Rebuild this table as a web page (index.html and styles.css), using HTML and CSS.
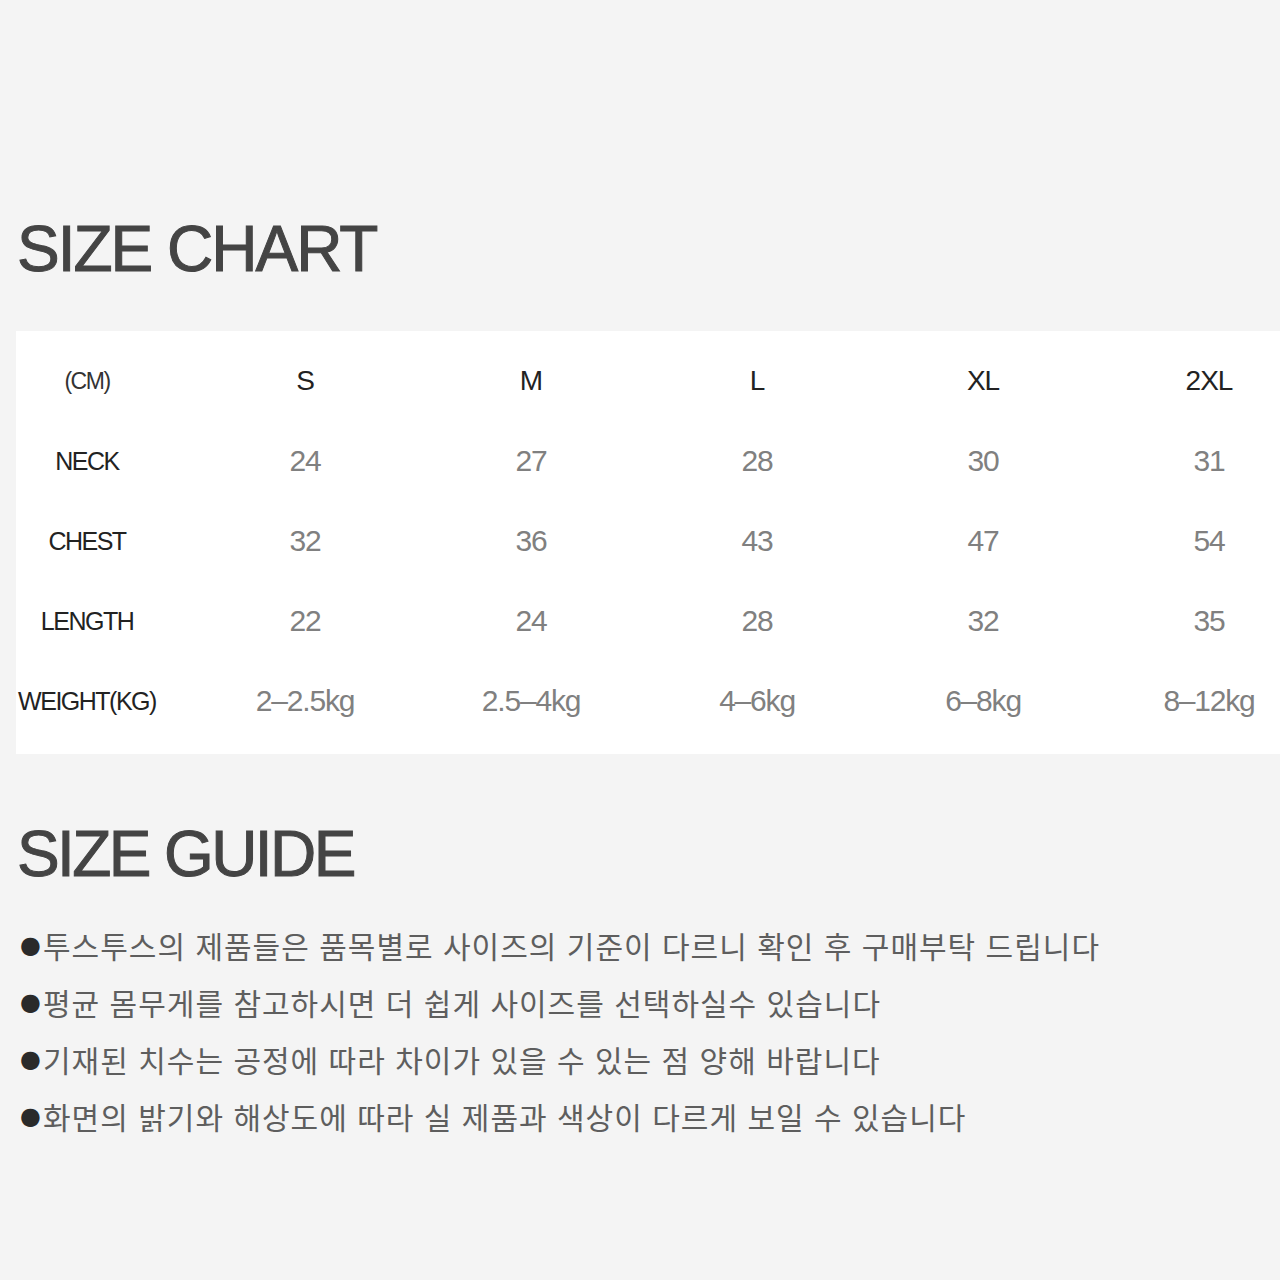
FILE: index.html
```html
<!DOCTYPE html>
<html lang="ko">
<head>
<meta charset="utf-8">
<title>Size Chart</title>
<link rel="stylesheet" href="styles.css">
</head>
<body>
<main class="page">
  <h1 class="heading heading-chart">SIZE CHART</h1>
  <section class="chart">
    <div class="grid">
      <div class="cell label unit">(CM)</div>
      <div class="cell size">S</div>
      <div class="cell size">M</div>
      <div class="cell size">L</div>
      <div class="cell size">XL</div>
      <div class="cell size">2XL</div>

      <div class="cell label">NECK</div>
      <div class="cell val">24</div>
      <div class="cell val">27</div>
      <div class="cell val">28</div>
      <div class="cell val">30</div>
      <div class="cell val">31</div>

      <div class="cell label">CHEST</div>
      <div class="cell val">32</div>
      <div class="cell val">36</div>
      <div class="cell val">43</div>
      <div class="cell val">47</div>
      <div class="cell val">54</div>

      <div class="cell label">LENGTH</div>
      <div class="cell val">22</div>
      <div class="cell val">24</div>
      <div class="cell val">28</div>
      <div class="cell val">32</div>
      <div class="cell val">35</div>

      <div class="cell label">WEIGHT(KG)</div>
      <div class="cell val">2–2.5kg</div>
      <div class="cell val">2.5–4kg</div>
      <div class="cell val">4–6kg</div>
      <div class="cell val">6–8kg</div>
      <div class="cell val">8–12kg</div>
    </div>
  </section>

  <h2 class="heading heading-guide">SIZE GUIDE</h2>
  <ul class="guide">
    <li><span class="dot">●</span>투스투스의 제품들은 품목별로 사이즈의 기준이 다르니 확인 후 구매부탁 드립니다</li>
    <li><span class="dot">●</span>평균 몸무게를 참고하시면 더 쉽게 사이즈를 선택하실수 있습니다</li>
    <li><span class="dot">●</span>기재된 치수는 공정에 따라 차이가 있을 수 있는 점 양해 바랍니다</li>
    <li><span class="dot">●</span>화면의 밝기와 해상도에 따라 실 제품과 색상이 다르게 보일 수 있습니다</li>
  </ul>
</main>
</body>
</html>
```

FILE: styles.css
```css
* { box-sizing: border-box; }

html, body {
  margin: 0;
  padding: 0;
  background: #f4f4f4;
  overflow-x: hidden;
}

body {
  font-family: "Liberation Sans", Arial, "Noto Sans CJK KR", sans-serif;
  width: 1280px;
  min-height: 1280px;
}

.page {
  padding-top: 217px;
}

.heading {
  margin: 0;
  padding-left: 17px;
  font-size: 64px;
  line-height: 64px;
  font-weight: 400;
  color: #444;
  letter-spacing: -2px;
  -webkit-text-stroke: 1px #444;
}

.heading-guide {
  margin-top: 68px;
  letter-spacing: -2.6px;
}

.chart {
  margin: 50px 0 0 16px;
  width: 1264px;
  height: 423px;
  background: #fff;
  overflow: hidden;
  padding-top: 10px;
}

.grid {
  display: grid;
  grid-template-columns: 176px repeat(5, 226px);
  grid-auto-rows: 80px;
  width: 1306px;
}

.cell {
  display: flex;
  align-items: center;
  justify-content: center;
  white-space: nowrap;
}

.label {
  padding-right: 34px;
  font-size: 25px;
  letter-spacing: -1.5px;
  color: #222;
}

.unit {
  font-size: 23px;
  color: #333;
}

.size {
  font-size: 28px;
  letter-spacing: -1px;
  color: #222;
}

.val {
  font-size: 30px;
  letter-spacing: -1.2px;
  color: #808080;
}

.guide {
  list-style: none;
  margin: 31px 0 0;
  padding: 0 0 0 20px;
  font-family: "Noto Sans CJK KR", "Liberation Sans", sans-serif;
  font-size: 30px;
  line-height: 57px;
  letter-spacing: 1px;
  color: #5e5e5e;
}

.guide li {
  display: flex;
  align-items: center;
  white-space: nowrap;
}

.dot {
  font-family: "DejaVu Sans", sans-serif;
  font-size: 24px;
  letter-spacing: 0;
  color: #2a2a2a;
  width: 23px;
}
```
